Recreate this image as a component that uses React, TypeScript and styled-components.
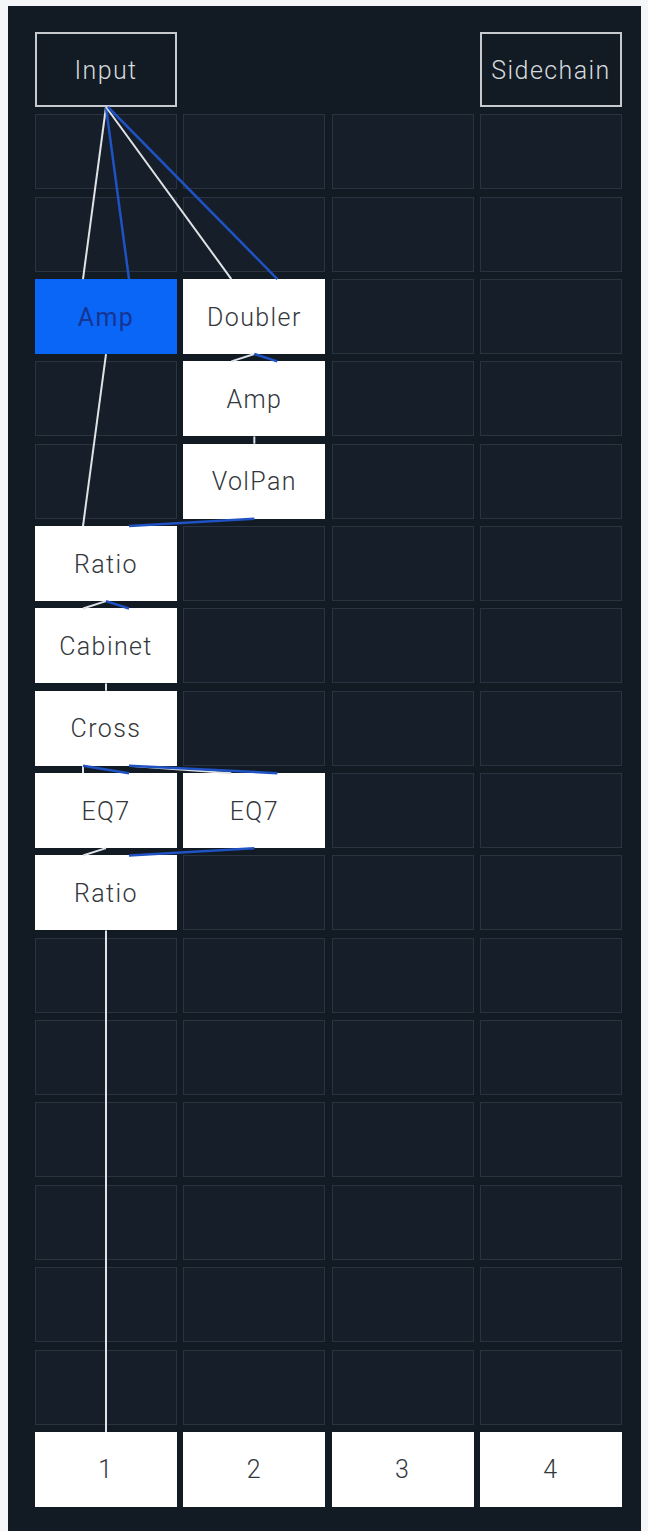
import React from "react";
import styled, { createGlobalStyle, css } from "styled-components";

const GlobalStyle = createGlobalStyle`
  html, body {
    margin: 0;
    padding: 0;
    background: #f4f6f7;
  }
  body {
    font-family: Roboto, "Liberation Sans", sans-serif;
  }
`;

const COLS = 4;
const ROWS = 18;
const COL_W = 142;
const COL_GAP = 19 / 3;
const ROW_H = 75;
const ROW_GAP = 7.35;
const BOARD_W = COLS * COL_W + (COLS - 1) * COL_GAP;
const BOARD_H = ROWS * ROW_H + (ROWS - 1) * ROW_GAP;
const PORT = 23;

const Panel = styled.div`
  box-sizing: border-box;
  margin: 6px 7px 0 8px;
  height: 1525px;
  padding: 26px 19px 0 27px;
  background: #121a24;
`;

const Board = styled.div`
  position: relative;
  width: ${BOARD_W}px;
  height: ${BOARD_H}px;
  display: grid;
  grid-template-columns: repeat(${COLS}, ${COL_W}px);
  grid-auto-rows: ${ROW_H}px;
  column-gap: ${COL_GAP}px;
  row-gap: ${ROW_GAP}px;
`;

type Kind = "empty" | "node" | "active" | "io" | "blank";

const Cell = styled.div<{ $kind: Kind }>`
  box-sizing: border-box;
  display: flex;
  align-items: center;
  justify-content: center;
  padding-top: 1px;
  font-size: 25px;
  letter-spacing: 1.4px;
  font-weight: 300;
  ${({ $kind }) => {
    switch ($kind) {
      case "node":
        return css`
          background: #ffffff;
          color: #33373c;
        `;
      case "active":
        return css`
          background: #0a66f7;
          color: #173491;
          font-weight: 400;
        `;
      case "io":
        return css`
          background: transparent;
          border: 2px solid #c6cacf;
          color: #d6dadd;
        `;
      case "blank":
        return css`
          background: transparent;
        `;
      default:
        return css`
          background: #151e29;
          border: 1.5px solid #2a3440;
        `;
    }
  }}
`;

const Wires = styled.svg`
  position: absolute;
  left: 0;
  top: 0;
  pointer-events: none;
  overflow: visible;
`;

// Rack layout: "row-column" -> module in that slot
const nodes: Record<string, { label: string; active?: boolean }> = {
  "3-0": { label: "Amp", active: true },
  "3-1": { label: "Doubler" },
  "4-1": { label: "Amp" },
  "5-1": { label: "VolPan" },
  "6-0": { label: "Ratio" },
  "7-0": { label: "Cabinet" },
  "8-0": { label: "Cross" },
  "9-0": { label: "EQ7" },
  "9-1": { label: "EQ7" },
  "10-0": { label: "Ratio" },
};

const cx = (c: number) => c * (COL_W + COL_GAP) + COL_W / 2;
const top = (r: number) => r * (ROW_H + ROW_GAP);
const bottom = (r: number) => top(r) + ROW_H;

type Wire = { x1: number; y1: number; x2: number; y2: number; ch: "l" | "r" };

const wires: Wire[] = [
  // Input -> Amp
  { x1: cx(0), y1: bottom(0), x2: cx(0) - PORT, y2: top(3), ch: "l" },
  { x1: cx(0), y1: bottom(0), x2: cx(0) + PORT, y2: top(3), ch: "r" },
  // Input -> Doubler
  { x1: cx(0), y1: bottom(0), x2: cx(1) - PORT, y2: top(3), ch: "l" },
  { x1: cx(0) + 2, y1: bottom(0), x2: cx(1) + PORT, y2: top(3), ch: "r" },
  // Amp -> Ratio
  { x1: cx(0), y1: bottom(3), x2: cx(0) - PORT, y2: top(6), ch: "l" },
  // Doubler -> Amp
  { x1: cx(1), y1: bottom(3), x2: cx(1) - PORT, y2: top(4), ch: "l" },
  { x1: cx(1), y1: bottom(3), x2: cx(1) + PORT, y2: top(4), ch: "r" },
  // Amp -> VolPan
  { x1: cx(1), y1: bottom(4), x2: cx(1), y2: top(5), ch: "l" },
  // VolPan -> Ratio
  { x1: cx(1), y1: bottom(5), x2: cx(0) + PORT, y2: top(6), ch: "r" },
  // Ratio -> Cabinet
  { x1: cx(0), y1: bottom(6), x2: cx(0) - PORT, y2: top(7), ch: "l" },
  { x1: cx(0), y1: bottom(6), x2: cx(0) + PORT, y2: top(7), ch: "r" },
  // Cabinet -> Cross
  { x1: cx(0), y1: bottom(7), x2: cx(0), y2: top(8), ch: "l" },
  // Cross -> EQ7 (low band)
  { x1: cx(0) - PORT, y1: bottom(8), x2: cx(0) - PORT, y2: top(9), ch: "l" },
  { x1: cx(0) - PORT, y1: bottom(8), x2: cx(0) + PORT, y2: top(9), ch: "r" },
  // Cross -> EQ7 (high band)
  { x1: cx(0) + PORT, y1: bottom(8), x2: cx(1) - PORT, y2: top(9), ch: "l" },
  { x1: cx(0) + PORT, y1: bottom(8), x2: cx(1) + PORT, y2: top(9), ch: "r" },
  // EQ7 -> Ratio
  { x1: cx(0), y1: bottom(9), x2: cx(0) - PORT, y2: top(10), ch: "l" },
  { x1: cx(1), y1: bottom(9), x2: cx(0) + PORT, y2: top(10), ch: "r" },
  // Ratio -> Output 1
  { x1: cx(0), y1: bottom(10), x2: cx(0), y2: top(17), ch: "l" },
];

function renderRow(r: number) {
  const cells: React.ReactNode[] = [];
  for (let c = 0; c < COLS; c++) {
    const key = `${r}-${c}`;
    if (r === 0) {
      if (c === 0) cells.push(<Cell key={key} $kind="io">Input</Cell>);
      else if (c === 3) cells.push(<Cell key={key} $kind="io">Sidechain</Cell>);
      else cells.push(<Cell key={key} $kind="blank" />);
    } else if (r === ROWS - 1) {
      cells.push(
        <Cell key={key} $kind="node">
          {c + 1}
        </Cell>
      );
    } else {
      const n = nodes[key];
      if (n) {
        cells.push(
          <Cell key={key} $kind={n.active ? "active" : "node"}>
            {n.label}
          </Cell>
        );
      } else {
        cells.push(<Cell key={key} $kind="empty" />);
      }
    }
  }
  return cells;
}

export default function App() {
  const rows: React.ReactNode[] = [];
  for (let r = 0; r < ROWS; r++) rows.push(...renderRow(r));
  return (
    <>
      <GlobalStyle />
      <Panel>
        <Board>
          {rows}
          <Wires width={BOARD_W} height={BOARD_H} viewBox={`0 0 ${BOARD_W} ${BOARD_H}`}>
            {wires.map((w, i) => (
              <line
                key={i}
                x1={w.x1}
                y1={w.y1}
                x2={w.x2}
                y2={w.y2}
                stroke={w.ch === "l" ? "#dfe3e6" : "#1f52c2"}
                strokeWidth={w.ch === "l" ? 2 : 2.5}
              />
            ))}
          </Wires>
        </Board>
      </Panel>
    </>
  );
}
